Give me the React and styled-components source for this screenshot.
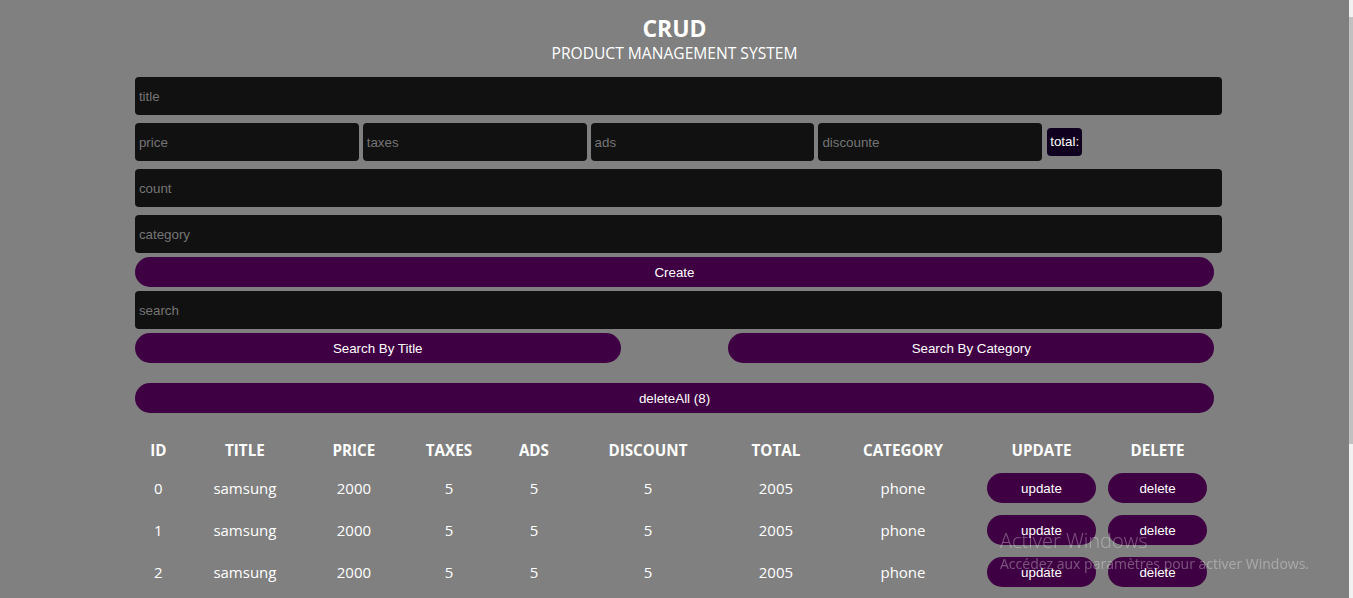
import styled, { createGlobalStyle } from 'styled-components';

const GlobalStyle = createGlobalStyle`
  html {
    scrollbar-width: none;
  }
  html::-webkit-scrollbar {
    display: none;
  }
  body {
    margin: 0 4px 0 0;
    background: #808080;
    color: #fff;
    font-family: 'Open Sans', 'Noto Sans', sans-serif;
  }
  * {
    font-family: inherit;
  }
`;

const Crud = styled.div`
  width: 80%;
  margin: 0 auto;
`;

const Head = styled.div`
  text-align: center;
  padding: 14px 0 9px;
`;

const Title = styled.h2`
  margin: 0;
  font-size: 23px;
  line-height: 28px;
  font-weight: 700;
`;

const Subtitle = styled.p`
  margin: 0;
  font-size: 15.6px;
  line-height: 22px;
`;

const Form = styled.div`
  display: flex;
  flex-direction: column;
`;

const Input = styled.input`
  display: block;
  width: 100%;
  height: 30px;
  padding: 4px;
  margin: 4px 0;
  box-sizing: content-box;
  border: none;
  outline: none;
  border-radius: 4px;
  background: #111;
  color: #fff;
  font-family: 'Liberation Sans', Arial, sans-serif;
  font-size: 13.33px;

  &::placeholder {
    color: #757575;
  }
`;

const PriceRow = styled.div`
  display: flex;
  align-items: center;
  gap: 4px;

  ${Input} {
    flex: none;
    width: 20%;
  }
`;

const Total = styled.small`
  margin-left: 1px;
  padding: 6px 3px;
  border-radius: 4px;
  background: #10001f;
  color: #fff;
  font-family: 'Liberation Sans', Arial, sans-serif;
  font-size: 13.33px;
  line-height: 16px;
`;

const Button = styled.button`
  display: block;
  width: ${({ $width }) => $width || '100%'};
  height: 30px;
  margin: ${({ $margin }) => $margin || '0'};
  border: none;
  border-radius: 20px;
  background: #3e0042;
  color: #fff;
  cursor: pointer;
  font-family: 'Liberation Sans', Arial, sans-serif;
  font-size: 13.33px;
`;

const SearchButtons = styled.div`
  display: flex;
  justify-content: space-between;
`;

const Table = styled.table`
  width: 100%;
  border-spacing: 2px;
  line-height: 21px;
  font-size: 15px;
`;

const Th = styled.th`
  width: ${({ $w }) => $w}px;
  padding: 5px;
  text-align: center;
  text-transform: uppercase;
  font-weight: 700;
  font-size: 15.2px;
`;

const Td = styled.td`
  padding: 5px;
  text-align: center;
  vertical-align: middle;
`;

const Scrollbar = styled.div`
  position: fixed;
  top: 0;
  right: 0;
  bottom: 0;
  width: 4px;
  padding-top: 17px;
  background: #f1f1f1;
  box-sizing: border-box;
`;

const Thumb = styled.div`
  height: 427px;
  background: #c1c1c1;
`;

const Watermark = styled.div`
  position: fixed;
  left: 1000px;
  top: 528px;
  color: rgba(255, 255, 255, 0.32);
  pointer-events: none;
`;

const WatermarkTitle = styled.div`
  font-size: 20px;
  line-height: 26px;
  font-weight: 300;
`;

const WatermarkText = styled.div`
  font-size: 14px;
  line-height: 20px;
`;

const columns = [
  ['id', 33],
  ['title', 116],
  ['price', 78],
  ['taxes', 88],
  ['ads', 58],
  ['discount', 146],
  ['total', 86],
  ['category', 144],
  ['update', 109],
  ['delete', 99],
];

const products = Array.from({ length: 8 }, (_, i) => ({
  id: i,
  title: 'samsung',
  price: 2000,
  taxes: 5,
  ads: 5,
  discount: 5,
  total: 2005,
  category: 'phone',
}));

export default function App() {
  return (
    <>
      <GlobalStyle />
      <Crud>
        <Head>
          <Title>CRUD</Title>
          <Subtitle>PRODUCT MANAGEMENT SYSTEM</Subtitle>
        </Head>

        <Form>
          <Input type="text" placeholder="title" />
          <PriceRow>
            <Input type="number" placeholder="price" />
            <Input type="number" placeholder="taxes" />
            <Input type="number" placeholder="ads" />
            <Input type="number" placeholder="discounte" />
            <Total>total:</Total>
          </PriceRow>
          <Input type="number" placeholder="count" />
          <Input type="text" placeholder="category" />
          <Button>Create</Button>

          <Input type="text" placeholder="search" />
          <SearchButtons>
            <Button $width="45%">Search By Title</Button>
            <Button $width="45%">Search By Category</Button>
          </SearchButtons>

          <Button $margin="20px 0">deleteAll ({products.length})</Button>
        </Form>

        <Table>
          <thead>
            <tr>
              {columns.map(([name, w]) => (
                <Th key={name} $w={w}>{name}</Th>
              ))}
            </tr>
          </thead>
          <tbody>
            {products.map((p) => (
              <tr key={p.id}>
                <Td>{p.id}</Td>
                <Td>{p.title}</Td>
                <Td>{p.price}</Td>
                <Td>{p.taxes}</Td>
                <Td>{p.ads}</Td>
                <Td>{p.discount}</Td>
                <Td>{p.total}</Td>
                <Td>{p.category}</Td>
                <Td><Button>update</Button></Td>
                <Td><Button>delete</Button></Td>
              </tr>
            ))}
          </tbody>
        </Table>
      </Crud>

      <Scrollbar>
        <Thumb />
      </Scrollbar>

      <Watermark>
        <WatermarkTitle>Activer Windows</WatermarkTitle>
        <WatermarkText>Accédez aux paramètres pour activer Windows.</WatermarkText>
      </Watermark>
    </>
  );
}
